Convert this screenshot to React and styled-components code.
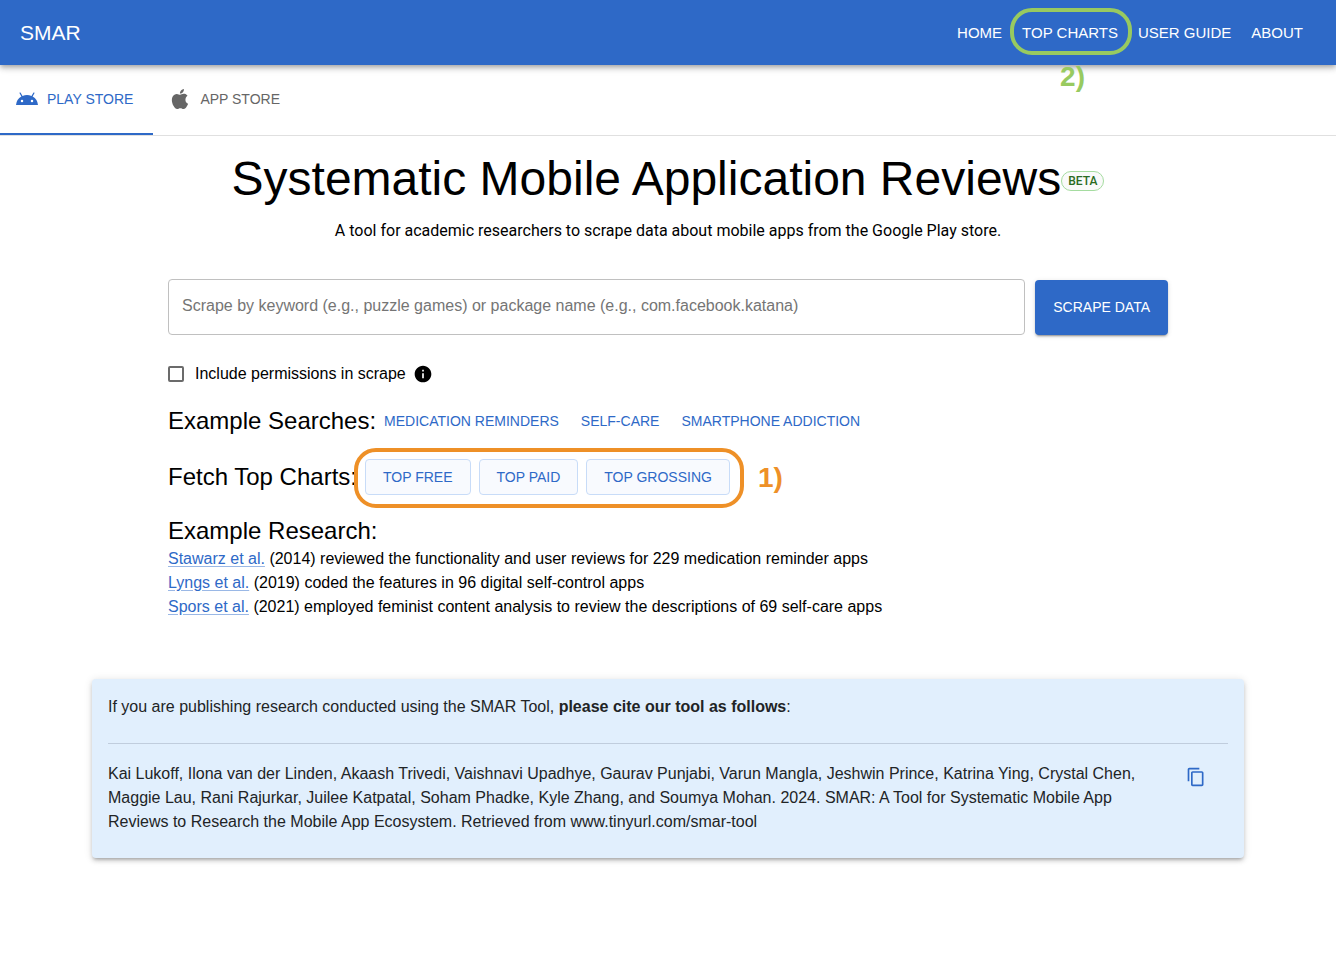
import React from 'react';
import styled, { createGlobalStyle } from 'styled-components';

const blue = '#2e69c7';

const GlobalStyle = createGlobalStyle`
  *, *::before, *::after { box-sizing: border-box; }
  body {
    margin: 0;
    background: #fff;
    color: #000;
    font: 16px/24px "Liberation Sans", Arial, sans-serif;
  }
  h1, h2, p { margin: 0; font-weight: 400; }
  button, input { font: inherit; }
`;

const Header = styled.header`
  position: relative;
  display: flex;
  align-items: center;
  justify-content: space-between;
  height: 65px;
  padding: 0 33px 0 20px;
  background: ${blue};
  color: #fff;
  box-shadow: 0 2px 4px -1px rgba(0, 0, 0, 0.2), 0 4px 5px rgba(0, 0, 0, 0.14), 0 1px 10px rgba(0, 0, 0, 0.12);
`;

const Brand = styled.a`
  font-size: 21px;
  line-height: 32px;
  color: inherit;
  text-decoration: none;
`;

const Nav = styled.nav`
  display: flex;
  gap: 20px;
`;

const NavLink = styled.a`
  position: relative;
  font-size: 15px;
  line-height: 24px;
  color: inherit;
  text-decoration: none;
`;

const Ring = styled.span`
  position: absolute;
  inset: ${(p) => p.$inset};
  border: 4px solid ${(p) => p.$color};
  border-radius: 22px;
  pointer-events: none;
`;

const Marker = styled.span`
  position: absolute;
  top: ${(p) => p.$top};
  left: ${(p) => p.$left};
  font-size: 28px;
  line-height: 32px;
  font-weight: 700;
  color: ${(p) => p.$color};
  pointer-events: none;
`;

const Tabs = styled.div`
  display: flex;
  border-bottom: 1px solid #e0e0e0;
`;

const Tab = styled.button`
  display: flex;
  align-items: center;
  gap: 8px;
  height: 70px;
  padding: 0 20px 0 15px;
  border: 0;
  border-bottom: 2px solid ${(p) => (p.$active ? blue : 'transparent')};
  background: none;
  color: ${(p) => (p.$active ? blue : '#666')};
  font-size: 14px;
`;

const Icon = styled.svg`
  display: block;
  flex: none;
  width: ${(p) => p.$size || 24}px;
  height: ${(p) => p.$size || 24}px;
  fill: currentColor;
`;

const Main = styled.main`
  max-width: 1200px;
  margin: 0 auto;
  padding: 0 24px 24px;
`;

const Content = styled.div`
  max-width: 1000px;
  margin: 0 auto;
`;

const Title = styled.h1`
  display: flex;
  align-items: center;
  justify-content: center;
  padding-top: 15px;
  font-size: 48px;
  line-height: 56px;
  white-space: nowrap;
`;

const Badge = styled.span`
  height: 20px;
  margin-top: 4px;
  padding: 0 6px;
  border: 1px solid #a5dca0;
  border-radius: 10px;
  background: #fafafa;
  color: #2b6a22;
  font: 500 12px/18px Roboto, sans-serif;
`;

const Subtitle = styled.p`
  padding-top: 12px;
  text-align: center;
  font-family: Roboto, sans-serif;
`;

const SearchForm = styled.form`
  padding-top: 36px;
`;

const SearchRow = styled.div`
  display: flex;
  align-items: center;
  gap: 10px;
`;

const SearchInput = styled.input`
  flex: 1;
  min-width: 0;
  height: 56px;
  padding: 0 13px 2px;
  border: 1px solid #c0c0c0;
  border-radius: 4px;
  background: #fff;
  &::placeholder { color: #757575; opacity: 1; }
`;

const ScrapeButton = styled.button`
  height: 55px;
  padding: 0 18px;
  border: 0;
  border-radius: 4px;
  background: ${blue};
  color: #fff;
  font-size: 14px;
  box-shadow: 0 3px 1px -2px rgba(0, 0, 0, 0.2), 0 2px 2px rgba(0, 0, 0, 0.14), 0 1px 5px rgba(0, 0, 0, 0.12);
`;

const OptionRow = styled.div`
  display: flex;
  align-items: center;
  gap: 7px;
  padding-top: 27px;
`;

const CheckLabel = styled.label`
  display: flex;
  align-items: center;
  gap: 11px;
`;

const Checkbox = styled.input`
  appearance: none;
  width: 16px;
  height: 16px;
  margin: 0;
  border: 2px solid #6b6b6b;
  border-radius: 2px;
  background: #fff;
  &:checked { background: ${blue}; border-color: ${blue}; }
`;

const Group = styled.div`
  display: flex;
  align-items: center;
  gap: 8px;
  padding-top: ${(p) => p.$top};
`;

const Heading = styled.h2`
  font-size: 24px;
  line-height: 32px;
  white-space: nowrap;
`;

const TextButtons = styled.div`
  display: flex;
  gap: 22px;
`;

const TextButton = styled.button`
  padding: 0;
  border: 0;
  background: none;
  color: ${blue};
  font-size: 14px;
  line-height: 24px;
`;

const ChartButtons = styled.div`
  position: relative;
  display: flex;
  gap: 8px;
`;

const ChartButton = styled.button`
  height: 36px;
  padding: 0 17px;
  border: 1px solid #c8dcf8;
  border-radius: 4px;
  background: #f8fafe;
  color: ${blue};
  font-size: 14px;
`;

const Research = styled.section`
  padding-top: 20px;
`;

const PaperLink = styled.a`
  color: ${blue};
  text-decoration-color: #9ab8e6;
  text-underline-offset: 2px;
`;

const CiteCard = styled.section`
  margin-top: 60px;
  padding: 16px 16px 24px;
  border-radius: 4px;
  background: #e1effd;
  color: #212426;
  box-shadow: 0 3px 3px -2px rgba(0, 0, 0, 0.2), 0 3px 4px rgba(0, 0, 0, 0.14), 0 1px 8px rgba(0, 0, 0, 0.12);
`;

const CiteIntro = styled.p`
  padding-bottom: 24px;
  border-bottom: 1px solid #c0cddd;
`;

const CiteBody = styled.div`
  display: flex;
  align-items: flex-start;
  justify-content: space-between;
  gap: 16px;
  padding: 18px 22px 0 0;
`;

const CopyButton = styled.button`
  margin-top: 5px;
  padding: 0;
  border: 0;
  background: none;
  color: ${blue};
`;

const papers = [
  ['Stawarz et al.', ' (2014) reviewed the functionality and user reviews for 229 medication reminder apps'],
  ['Lyngs et al.', ' (2019) coded the features in 96 digital self-control apps'],
  ['Spors et al.', ' (2021) employed feminist content analysis to review the descriptions of 69 self-care apps'],
];

const AndroidIcon = () => (
  <Icon viewBox="0 0 24 24" aria-hidden="true">
    <path d="M17.6 9.48l1.84-3.18c.16-.31.04-.69-.26-.85-.29-.15-.65-.06-.83.22l-1.88 3.24a11.463 11.463 0 0 0-8.94 0L5.65 5.67c-.19-.29-.58-.38-.87-.2-.28.18-.37.54-.22.83L6.4 9.48A10.78 10.78 0 0 0 1 18h22a10.78 10.78 0 0 0-5.4-8.52zM7 15.25a1.25 1.25 0 1 1 0-2.5 1.25 1.25 0 0 1 0 2.5zm10 0a1.25 1.25 0 1 1 0-2.5 1.25 1.25 0 0 1 0 2.5z" />
  </Icon>
);

const AppleIcon = () => (
  <Icon viewBox="0 0 24 24" aria-hidden="true">
    <path d="M18.71 19.5c-.83 1.24-1.71 2.45-3.05 2.47-1.34.03-1.77-.79-3.29-.79-1.53 0-2 .77-3.27.82-1.31.05-2.3-1.32-3.14-2.53C4.25 17 2.94 12.45 4.7 9.39c.87-1.52 2.43-2.48 4.12-2.51 1.28-.02 2.5.87 3.29.87.78 0 2.26-1.07 3.81-.91.65.03 2.47.26 3.64 1.98-.09.06-2.17 1.28-2.15 3.81.03 3.02 2.65 4.03 2.68 4.04-.03.07-.42 1.44-1.38 2.83M13 3.5c.73-.83 1.94-1.46 2.94-1.5.13 1.17-.34 2.35-1.04 3.19-.69.85-1.83 1.51-2.95 1.42-.15-1.15.41-2.35 1.05-3.11z" />
  </Icon>
);

const InfoIcon = () => (
  <Icon $size={20} viewBox="0 0 24 24" role="img" aria-label="About permissions">
    <path d="M12 2C6.48 2 2 6.48 2 12s4.48 10 10 10 10-4.48 10-10S17.52 2 12 2zm1 15h-2v-6h2v6zm0-8h-2V7h2v2z" />
  </Icon>
);

const CopyIcon = () => (
  <Icon $size={20} viewBox="0 0 24 24" aria-hidden="true">
    <path d="M16 1H4c-1.1 0-2 .9-2 2v14h2V3h12V1zm3 4H8c-1.1 0-2 .9-2 2v14c0 1.1.9 2 2 2h11c1.1 0 2-.9 2-2V7c0-1.1-.9-2-2-2zm0 16H8V7h11v14z" />
  </Icon>
);

export default function App() {
  return (
    <>
      <GlobalStyle />
      <Header>
        <Brand href="#">SMAR</Brand>
        <Nav>
          <NavLink href="#home">HOME</NavLink>
          <NavLink href="#charts">
            TOP CHARTS
            <Ring $color="#98ca60" $inset="-13px -14px -10px -12px" />
            <Marker $color="#98ca60" $top="40px" $left="38px">2)</Marker>
          </NavLink>
          <NavLink href="#guide">USER GUIDE</NavLink>
          <NavLink href="#about">ABOUT</NavLink>
        </Nav>
      </Header>
      <Tabs role="tablist">
        <Tab role="tab" aria-selected="true" $active><AndroidIcon />PLAY STORE</Tab>
        <Tab role="tab" aria-selected="false"><AppleIcon />APP STORE</Tab>
      </Tabs>
      <Main>
        <Content>
          <Title>Systematic Mobile Application Reviews<Badge>BETA</Badge></Title>
          <Subtitle>A tool for academic researchers to scrape data about mobile apps from the Google Play store.</Subtitle>
          <SearchForm onSubmit={(e) => e.preventDefault()}>
            <SearchRow>
              <SearchInput
                type="text"
                aria-label="Keyword or package name"
                placeholder="Scrape by keyword (e.g., puzzle games) or package name (e.g., com.facebook.katana)"
              />
              <ScrapeButton type="submit">SCRAPE DATA</ScrapeButton>
            </SearchRow>
            <OptionRow>
              <CheckLabel><Checkbox type="checkbox" />Include permissions in scrape</CheckLabel>
              <InfoIcon />
            </OptionRow>
          </SearchForm>
          <Group $top="19px">
            <Heading>Example Searches:</Heading>
            <TextButtons>
              <TextButton>MEDICATION REMINDERS</TextButton>
              <TextButton>SELF-CARE</TextButton>
              <TextButton>SMARTPHONE ADDICTION</TextButton>
            </TextButtons>
          </Group>
          <Group $top="22px">
            <Heading>Fetch Top Charts:</Heading>
            <ChartButtons>
              <ChartButton>TOP FREE</ChartButton>
              <ChartButton>TOP PAID</ChartButton>
              <ChartButton>TOP GROSSING</ChartButton>
              <Ring $color="#ee9027" $inset="-11px -14px -13px -11px" />
              <Marker $color="#ee9027" $top="3px" $left="calc(100% + 28px)">1)</Marker>
            </ChartButtons>
          </Group>
          <Research>
            <Heading>Example Research:</Heading>
            {papers.map(([name, text]) => (
              <p key={name}><PaperLink href="#paper">{name}</PaperLink>{text}</p>
            ))}
          </Research>
        </Content>
        <CiteCard>
          <CiteIntro>If you are publishing research conducted using the SMAR Tool, <b>please cite our tool as follows</b>:</CiteIntro>
          <CiteBody>
            <p>Kai Lukoff, Ilona van der Linden, Akaash Trivedi, Vaishnavi Upadhye, Gaurav Punjabi, Varun Mangla, Jeshwin Prince, Katrina Ying, Crystal Chen, Maggie Lau, Rani Rajurkar, Juilee Katpatal, Soham Phadke, Kyle Zhang, and Soumya Mohan. 2024. SMAR: A Tool for Systematic Mobile App Reviews to Research the Mobile App Ecosystem. Retrieved from www.tinyurl.com/smar-tool</p>
            <CopyButton aria-label="Copy citation"><CopyIcon /></CopyButton>
          </CiteBody>
        </CiteCard>
      </Main>
    </>
  );
}
